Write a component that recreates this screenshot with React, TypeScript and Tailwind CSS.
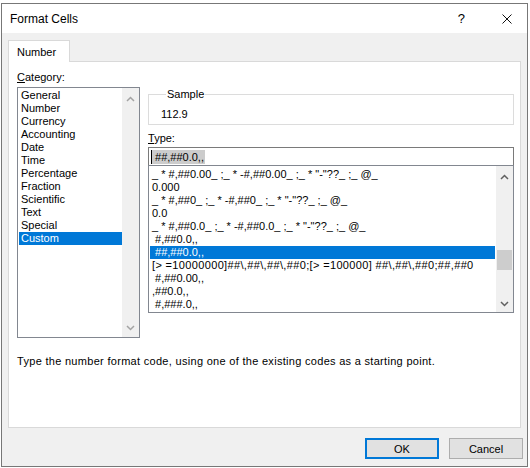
import React from 'react';

const CATEGORIES = [
  'General',
  'Number',
  'Currency',
  'Accounting',
  'Date',
  'Time',
  'Percentage',
  'Fraction',
  'Scientific',
  'Text',
  'Special',
  'Custom',
];

const CODES = [
  '_ * #,##0.00_ ;_ * -#,##0.00_ ;_ * "-"??_ ;_ @_',
  '0.000',
  '_ * #,##0_ ;_ * -#,##0_ ;_ * "-"??_ ;_ @_',
  '0.0',
  '_ * #,##0.0_ ;_ * -#,##0.0_ ;_ * "-"??_ ;_ @_',
  ' #,##0.0,,',
  ' ##,##0.0,,',
  '[> =10000000]##\\,##\\,##\\,##0;[> =100000] ##\\,##\\,##0;##,##0',
  ' #,##0.00,,',
  ',##0.0,,',
  ' #,###.0,,',
];

function Chevron({ up, color }: { up?: boolean; color: string }) {
  return (
    <svg width="9" height="6" viewBox="0 0 9 6" className="block">
      <polyline
        points={up ? '1,5 4.5,1.5 8,5' : '1,1 4.5,4.5 8,1'}
        fill="none"
        stroke={color}
        strokeWidth="1.5"
      />
    </svg>
  );
}

export default function App() {
  return (
    <div className="w-[530px] h-[468px] bg-white pt-[3px] pl-[1px] overflow-hidden font-['Liberation_Sans',Arial,sans-serif] text-black">
      <div className="w-[527px] h-[464px] border border-[#777777] flex flex-col bg-[#f0f0f0]">
        {/* title bar */}
        <div className="h-[29px] bg-white flex items-center pl-[8px] text-[12px]">
          <span>Format Cells</span>
          <span className="ml-auto text-[13px] leading-none">?</span>
          <svg width="10" height="10" viewBox="0 0 10 10" className="ml-[37px] mr-[15px]">
            <path d="M0.5 0.5 L9.5 9.5 M9.5 0.5 L0.5 9.5" stroke="#111" strokeWidth="1" />
          </svg>
        </div>

        <div className="flex-1 flex flex-col pt-[7px] pl-[6px] text-[11px] leading-[14px]">
          {/* tab */}
          <div className="relative z-10 -mb-px w-[62px] h-[22px] bg-white border-t border-l border-r border-[#d9d9d9] pl-[8px] pt-[4px]">
            Number
          </div>

          {/* tab page */}
          <div className="w-[513px] h-[367px] bg-white border border-[#d9d9d9] pl-[8px] flex flex-col">
            <div className="flex items-start gap-[8px]">
              {/* category column */}
              <div className="w-[123px] flex flex-col mt-[8px]">
                <div className="h-[14px]">
                  <span className="underline">C</span>ategory:
                </div>
                <div className="mt-[3px] h-[251px] border border-[#828790] flex">
                  <div className="flex-1 pt-[1px] pl-[1px]">
                    {CATEGORIES.map((c) => (
                      <div
                        key={c}
                        className={
                          c === 'Custom'
                            ? 'h-[13px] leading-[13px] pl-[2px] bg-[#0078d7] text-white'
                            : 'h-[13px] leading-[13px] pl-[2px]'
                        }
                      >
                        {c}
                      </div>
                    ))}
                  </div>
                  <div className="w-[17px] bg-[#f0f0f0] flex flex-col items-center justify-between pt-[8px] pb-[6px]">
                    <Chevron up color="#a3a3a3" />
                    <Chevron color="#a3a3a3" />
                  </div>
                </div>
              </div>

              {/* right column */}
              <div className="w-[366px] flex flex-col mt-[25px]">
                <fieldset className="border border-[#dcdcdc] h-[38px] pl-[12px]">
                  <legend className="ml-[5px] px-[1px] leading-[14px]">Sample</legend>
                  <div className="mt-[6px]">112.9</div>
                </fieldset>
                <div className="mt-[6px] h-[14px]">
                  <span className="underline">T</span>ype:
                </div>
                <div className="mt-[2px] h-[19px] border border-[#7a7a7a] flex items-center pl-[2px]">
                  <span className="w-px h-[14px] bg-black" />
                  <span className="bg-[#cccccc] whitespace-pre h-[14px] leading-[14px] pr-[1px]">
                    {' ##,##0.0,,'}
                  </span>
                </div>
                <div className="-mt-px h-[148px] border border-[#828790] flex">
                  <div className="flex-1 pt-[2px] overflow-hidden">
                    {CODES.map((code, i) => (
                      <div
                        key={i}
                        className={
                          i === 6
                            ? 'mx-px h-[13px] leading-[13px] pl-[2px] whitespace-pre bg-[#0078d7] text-white'
                            : i === 7
                              ? 'mx-px h-[13px] leading-[13px] pl-[2px] whitespace-pre tracking-[0.35px]'
                              : 'mx-px h-[13px] leading-[13px] pl-[2px] whitespace-pre'
                        }
                      >
                        {code}
                      </div>
                    ))}
                  </div>
                  <div className="w-[17px] bg-[#f0f0f0] flex flex-col items-center pt-[8px] pb-[5px]">
                    <Chevron up color="#606060" />
                    <div className="mt-[70px] w-[15px] h-[20px] bg-[#cdcdcd]" />
                    <div className="mt-auto">
                      <Chevron color="#606060" />
                    </div>
                  </div>
                </div>
              </div>
            </div>

            <div className="mt-[16px] tracking-[0.3px]">
              Type the number format code, using one of the existing codes as a starting point.
            </div>
          </div>

          {/* buttons */}
          <div className="mt-[10px] flex justify-end gap-[10px] pr-[4px]">
            <button className="w-[74px] h-[21px] bg-[#e1e1e1] border-2 border-[#0078d7] text-[11px]">
              OK
            </button>
            <button className="w-[74px] h-[21px] bg-[#e1e1e1] border border-[#adadad] text-[11px]">
              Cancel
            </button>
          </div>
        </div>
      </div>
    </div>
  );
}
